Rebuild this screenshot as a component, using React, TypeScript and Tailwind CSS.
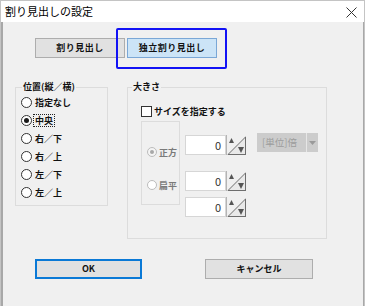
import React from 'react';

const positions = ['指定なし', '中央', '右／下', '右／上', '左／下', '左／上'];

function Radio({ label, checked, focus }: { label: string; checked?: boolean; focus?: boolean }) {
  return (
    <div className="flex h-[18px] items-center">
      <span className="flex h-[11px] w-[11px] items-center justify-center rounded-full border border-[#333333] bg-white">
        {checked && <span className="h-[5px] w-[5px] rounded-full bg-[#1a1a1a]" />}
      </span>
      <span
        className={
          focus
            ? 'ml-[1px] border border-dotted border-[#222] px-[1px] leading-[11px]'
            : 'ml-[1px] border border-transparent px-[1px] leading-[11px]'
        }
      >
        {label}
      </span>
    </div>
  );
}

function Spin() {
  return (
    <svg width="20" height="20" viewBox="0 0 20 20" className="block">
      <rect x="0" y="0" width="20" height="20" fill="#f0f0f0" />
      <polygon points="20,1 20,20 1,20" fill="#e9e9e9" />
      <line x1="0.5" y1="0" x2="0.5" y2="20" stroke="#b4b4b4" />
      <line x1="2" y1="19.5" x2="20" y2="1.5" stroke="#6e6e6e" />
      <line x1="19.5" y1="2" x2="19.5" y2="20" stroke="#6e6e6e" />
      <line x1="2" y1="19.5" x2="20" y2="19.5" stroke="#6e6e6e" />
      <polygon points="3,8 5.5,3 8,8" fill="#555" />
      <polygon points="12,12 18,12 15,18" fill="#555" />
    </svg>
  );
}

function NumberField() {
  return (
    <div className="flex h-[20px]">
      <div className="flex w-[41px] items-center justify-end border border-[#d6d6d6] bg-white pr-[4px] text-[11px] font-normal text-[#333]">
        0
      </div>
      <Spin />
    </div>
  );
}

export default function App() {
  return (
    <div className="h-[306px] w-[367px] overflow-hidden bg-white font-['Noto_Sans_CJK_JP','Noto_Sans',sans-serif] text-[9px] text-[#111]">
      <div className="flex h-[306px] w-[365px] flex-col border-x border-t border-[#c4c4c4]">
        {/* title bar */}
        <div className="flex h-[21px] shrink-0 items-center justify-between bg-white pl-[4px] pr-[6px]">
          <span className="text-[11px] leading-none text-black">割り見出しの設定</span>
          <svg width="11" height="11" viewBox="0 0 11 11" className="mr-[1px] mt-[1px]">
            <path d="M0.5 0.5 L10.5 10.5 M10.5 0.5 L0.5 10.5" stroke="#333" strokeWidth="1" />
          </svg>
        </div>

        {/* body */}
        <div className="flex-1 border-l-2 border-r border-[#a8a8a8] bg-[#f0f0f0] font-bold">
          {/* mode buttons */}
          <div className="ml-[32px] mt-[16px] flex gap-[2px]">
            <div className="flex h-[20px] w-[90px] items-center justify-center border border-[#adadad] bg-[#e1e1e1] tracking-[0.5px]">
              割り見出し
            </div>
            <div className="relative">
              <div className="flex h-[20px] w-[90px] items-center justify-center border border-[#7aa7d6] bg-[#cce4f7] tracking-[0.5px]">
                独立割り見出し
              </div>
              <div className="absolute -left-[11px] -right-[10px] -top-[10px] -bottom-[11px] rounded-[2px] border-2 border-[#1212f5]" />
            </div>
          </div>

          {/* groups */}
          <div className="mt-[23px] flex items-start">
            <fieldset className="ml-[12px] h-[125px] w-[93px] border border-[#dcdcdc] pl-[5px]">
              <legend className="ml-[1px] px-[1px] leading-[12px]">位置(縦／横)</legend>
              {positions.map((p, i) => (
                <Radio key={p} label={p} checked={i === 1} focus={i === 1} />
              ))}
            </fieldset>

            <fieldset className="ml-[19px] h-[158px] w-[200px] border border-[#dcdcdc]">
              <legend className="ml-[4px] px-[1px] leading-[12px]">大きさ</legend>
              <div className="ml-[13px] mt-[13px] flex items-center">
                <span className="h-[11px] w-[11px] border border-[#333] bg-white" />
                <span className="ml-[2px] leading-[11px]">サイズを指定する</span>
              </div>

              <div className="mt-[4px] flex items-start">
                <div className="ml-[13px] h-[84px] w-[39px] border border-[#dcdcdc] pl-[5px] pt-[24px] text-[#7a7a7a]">
                  <div className="flex h-[12px] items-center">
                    <span className="flex h-[10px] w-[10px] items-center justify-center rounded-full border border-[#bcbcbc] bg-[#f4f4f4]">
                      <span className="h-[4px] w-[4px] rounded-full bg-[#a8a8a8]" />
                    </span>
                    <span className="ml-[2px] leading-none">正方</span>
                  </div>
                  <div className="mt-[21px] flex h-[12px] items-center">
                    <span className="h-[10px] w-[10px] rounded-full border border-[#bcbcbc] bg-white" />
                    <span className="ml-[2px] leading-none">扁平</span>
                  </div>
                </div>

                <div className="ml-[5px] mt-[14px] flex flex-col">
                  <NumberField />
                  <div className="mt-[16px]">
                    <NumberField />
                  </div>
                  <div className="mt-[6px]">
                    <NumberField />
                  </div>
                </div>

                <div className="ml-[11px] mt-[12px] flex h-[19px] w-[61px] items-center bg-[#cccccc] font-normal text-[#9c9c9c]">
                  <span className="flex-1 pl-[5px] text-[9.5px]">[単位]倍</span>
                  <span className="flex h-full w-[12px] items-center justify-center border-l border-[#e6e6e6]">
                    <svg width="7" height="4" viewBox="0 0 7 4">
                      <polygon points="0,0 7,0 3.5,4" fill="#9a9a9a" />
                    </svg>
                  </span>
                </div>
              </div>
            </fieldset>
          </div>

          {/* footer buttons */}
          <div className="ml-[32px] mt-[20px] flex">
            <div className="flex h-[20px] w-[107px] items-center justify-center border-2 border-[#0a79d6] bg-[#e1e1e1]">
              OK
            </div>
            <div className="ml-[63px] flex h-[20px] w-[108px] items-center justify-center border border-[#adadad] bg-[#e1e1e1]">
              キャンセル
            </div>
          </div>
        </div>
      </div>
    </div>
  );
}
